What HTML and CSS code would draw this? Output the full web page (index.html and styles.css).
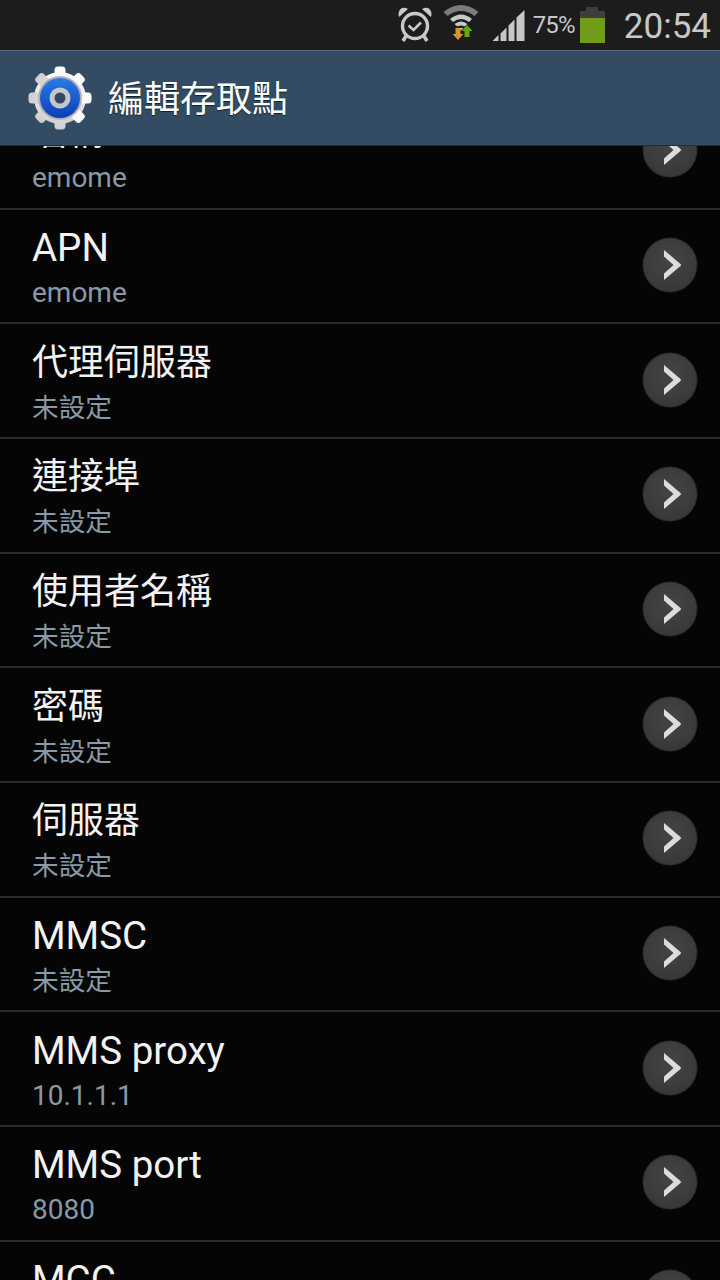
FILE: index.html
```html
<!DOCTYPE html>
<html lang="zh-Hant">
<head>
    <meta charset="UTF-8">
    <meta name="viewport" content="width=device-width, initial-scale=1.0">
    <title>編輯存取點</title>
    <link rel="stylesheet" href="styles.css">
</head>
<body>
    <svg class="defs" width="0" height="0">
        <defs>
            <radialGradient id="btnFill" cx="50%" cy="40%" r="60%">
                <stop offset="0" stop-color="#454545"/>
                <stop offset="1" stop-color="#383838"/>
            </radialGradient>
            <symbol id="arrowBtn" viewBox="0 0 56 56">
                <circle cx="28" cy="28" r="27.5" fill="#2a2a2a"/>
                <circle cx="28" cy="28" r="26.5" fill="url(#btnFill)"/>
                <path d="M22 13 L38.5 27 Q39.5 28 38.5 29 L22 43 L22 36.5 L31.5 28 L22 19.5 Z" fill="#dcdcdc"/>
            </symbol>
        </defs>
    </svg>

    <div class="status-bar">
        <!-- Alarm -->
        <svg class="icon-alarm" width="36" height="36" viewBox="0 0 36 36">
            <path d="M2 11 L11 3 Q6.5 0.5 3.5 3 Q0.5 6 2 11 Z M34 11 L25 3 Q29.5 0.5 32.5 3 Q35.5 6 34 11 Z" fill="#c8c8c8"/>
            <circle cx="18" cy="20" r="12.5" fill="none" stroke="#c8c8c8" stroke-width="3.4"/>
            <path d="M11.5 19.5 L16.5 24 L24 16.5" fill="none" stroke="#c8c8c8" stroke-width="2.6"/>
            <path d="M9 30 L6 35 M27 30 L30 35" stroke="#c8c8c8" stroke-width="3.6"/>
        </svg>
        <!-- Wifi with data arrows -->
        <svg class="icon-wifi" width="36" height="36" viewBox="0 0 36 36">
            <path d="M0.5 8 Q18 -6 35.5 8 L31.5 12 Q18 2 4.5 12 Z" fill="#7b7b7b"/>
            <path d="M7 15 Q18 6 29 15 L26 18 Q18 12 10 18 Z" fill="#c8c8c8"/>
            <path d="M11.5 20 Q18 15 24.5 20 L21.5 22.5 Q18 20.5 14.5 22.5 Z" fill="#c8c8c8"/>
            <path d="M15.5 24 L20.5 24 L18 26.5 Z" fill="#c8c8c8"/>
            <path d="M12.5 24 H17.5 V30 H20.5 L15 36 L9.5 30 H12.5 Z" fill="#d6932f"/>
            <path d="M24 21 L29.5 27 H26.5 V33 H21.5 V27 H18.5 Z" fill="#5fa80e"/>
        </svg>
        <!-- Signal -->
        <svg class="icon-signal" width="33" height="32" viewBox="0 0 32 32">
            <path d="M0 31 L6 31 L6 25 Z M8 31 L14 31 L14 17.5 L8 23.5 Z M16 31 L22 31 L22 9.5 L16 15.5 Z M24 31 L32 31 L32 0 L24 7.5 Z" fill="#c8c8c8"/>
        </svg>
        <span class="battery-pct">75%</span>
        <div class="battery">
            <div class="battery-cap"></div>
            <div class="battery-body"><div class="battery-level"></div></div>
        </div>
        <span class="clock">20:54</span>
    </div>

    <div class="action-bar">
        <svg class="icon-settings" width="64" height="64" viewBox="0 0 64 64">
            <defs>
                <linearGradient id="gearFill" x1="0" y1="0" x2="0" y2="1">
                    <stop offset="0" stop-color="#ffffff"/>
                    <stop offset="1" stop-color="#cfcfcf"/>
                </linearGradient>
                <linearGradient id="blueFill" x1="0" y1="0" x2="0" y2="1">
                    <stop offset="0" stop-color="#2a7be8"/>
                    <stop offset="1" stop-color="#0a3fb5"/>
                </linearGradient>
            </defs>
            <g fill="url(#gearFill)">
                <circle cx="32" cy="32" r="26"/>
                <rect x="26.5" y="0.5" width="11" height="63" rx="3.5"/>
                <rect x="26.5" y="0.5" width="11" height="63" rx="3.5" transform="rotate(45 32 32)"/>
                <rect x="26.5" y="0.5" width="11" height="63" rx="3.5" transform="rotate(90 32 32)"/>
                <rect x="26.5" y="0.5" width="11" height="63" rx="3.5" transform="rotate(135 32 32)"/>
            </g>
            <circle cx="32" cy="32" r="22" fill="#b0b0b0"/>
            <circle cx="32" cy="32" r="20" fill="url(#blueFill)"/>
            <circle cx="32" cy="32" r="10.5" fill="#c4c8cc"/>
            <circle cx="32" cy="32" r="5.5" fill="#34495f"/>
        </svg>
        <h1 class="page-title">編輯存取點</h1>
    </div>

    <div class="list-viewport">
        <ul class="settings-list">
            <li class="row"><div class="row-text"><span class="row-title">名稱</span><span class="row-value">emome</span></div><svg class="row-btn"><use href="#arrowBtn"/></svg></li>
            <li class="row"><div class="row-text"><span class="row-title latin">APN</span><span class="row-value">emome</span></div><svg class="row-btn"><use href="#arrowBtn"/></svg></li>
            <li class="row"><div class="row-text"><span class="row-title">代理伺服器</span><span class="row-value cjk">未設定</span></div><svg class="row-btn"><use href="#arrowBtn"/></svg></li>
            <li class="row"><div class="row-text"><span class="row-title">連接埠</span><span class="row-value cjk">未設定</span></div><svg class="row-btn"><use href="#arrowBtn"/></svg></li>
            <li class="row"><div class="row-text"><span class="row-title">使用者名稱</span><span class="row-value cjk">未設定</span></div><svg class="row-btn"><use href="#arrowBtn"/></svg></li>
            <li class="row"><div class="row-text"><span class="row-title">密碼</span><span class="row-value cjk">未設定</span></div><svg class="row-btn"><use href="#arrowBtn"/></svg></li>
            <li class="row"><div class="row-text"><span class="row-title">伺服器</span><span class="row-value cjk">未設定</span></div><svg class="row-btn"><use href="#arrowBtn"/></svg></li>
            <li class="row"><div class="row-text"><span class="row-title latin">MMSC</span><span class="row-value cjk">未設定</span></div><svg class="row-btn"><use href="#arrowBtn"/></svg></li>
            <li class="row"><div class="row-text"><span class="row-title latin">MMS proxy</span><span class="row-value">10.1.1.1</span></div><svg class="row-btn"><use href="#arrowBtn"/></svg></li>
            <li class="row"><div class="row-text"><span class="row-title latin">MMS port</span><span class="row-value">8080</span></div><svg class="row-btn"><use href="#arrowBtn"/></svg></li>
            <li class="row"><div class="row-text"><span class="row-title latin">MCC</span><span class="row-value">466</span></div><svg class="row-btn"><use href="#arrowBtn"/></svg></li>
        </ul>
    </div>
</body>
</html>
```

FILE: styles.css
```css
/* Page */
html, body {
    height: 100%;
}

body {
    margin: 0;
    background-color: #050505;
    font-family: Roboto, "Noto Sans CJK TC", sans-serif;
    color: #f2f2f2;
    overflow: hidden;
    display: flex;
    flex-direction: column;
}

.defs {
    position: absolute;
}

/* Status bar */
.status-bar {
    height: 50px;
    flex: none;
    background-color: #1c1c1c;
    display: flex;
    align-items: center;
    justify-content: flex-end;
    color: #c8c8c8;
}

.icon-alarm {
    margin-right: 10px;
    margin-top: -2px;
}

.icon-wifi {
    margin-right: 13px;
    margin-top: -6px;
}

.icon-signal {
    margin-top: 2px;
}

.battery-pct {
    font-size: 24px;
    margin: 0 5px 0 8px;
    letter-spacing: -0.8px;
}

.battery {
    width: 25px;
    height: 36px;
    display: flex;
    flex-direction: column;
    align-items: center;
    margin-right: 19px;
}

.battery-cap {
    width: 12px;
    height: 4px;
    background-color: #3e3e3e;
}

.battery-body {
    width: 25px;
    height: 32px;
    background-color: #3e3e3e;
    display: flex;
    align-items: flex-end;
}

.battery-level {
    width: 100%;
    height: 25px;
    background-color: #6f9d18;
}

.clock {
    font-size: 35px;
    margin: 3px 9px 0 0;
}

/* Action bar */
.action-bar {
    height: 96px;
    flex: none;
    box-sizing: border-box;
    background-color: #344c63;
    border-top: 1px solid #4e6b85;
    border-bottom: 1px solid #1e2d3b;
    display: flex;
    align-items: center;
    padding-left: 28px;
    position: relative;
    z-index: 1;
}

.icon-settings {
    margin-bottom: 1px;
}

.page-title {
    margin: 0 0 4px 16px;
    font-size: 36px;
    font-weight: 400;
    color: #fff;
    text-shadow: 0 1px 1px rgba(0, 0, 0, 0.6);
}

/* List */
.list-viewport {
    flex: 1;
    overflow: hidden;
}

.settings-list {
    list-style: none;
    margin: -51px 0 0 0;
    padding: 0;
}

.row {
    height: 114.67px;
    box-sizing: border-box;
    border-bottom: 2px solid #2c2c2c;
    display: flex;
    align-items: center;
    justify-content: space-between;
    padding: 0 22px 0 32px;
}

.row-text {
    display: flex;
    flex-direction: column;
    padding-top: 2px;
}

.row-title {
    font-size: 36px;
    line-height: 50px;
}

.row-title.latin {
    font-size: 38.5px;
}

.row-value {
    font-size: 28px;
    line-height: 36px;
    margin-top: 2px;
    color: #879aa5;
}

.row-value.cjk {
    font-size: 26.67px;
}

.row-btn {
    width: 56px;
    height: 56px;
    flex: none;
    margin-bottom: 2px;
}
```
